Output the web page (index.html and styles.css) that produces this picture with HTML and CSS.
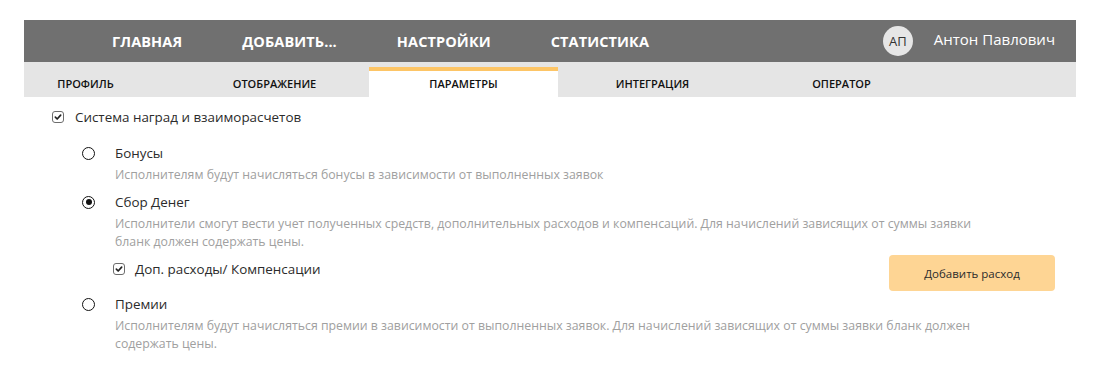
FILE: index.html
```html
<!DOCTYPE html>
<html lang="ru">
<head>
<meta charset="utf-8">
<title>Настройки — Параметры</title>
<link rel="stylesheet" href="styles.css">
</head>
<body>
<div class="page">
  <header class="topbar">
    <nav class="mainnav">
      <a class="mainnav-item">ГЛАВНАЯ</a>
      <a class="mainnav-item">ДОБАВИТЬ...</a>
      <a class="mainnav-item">НАСТРОЙКИ</a>
      <a class="mainnav-item">СТАТИСТИКА</a>
    </nav>
    <div class="user">
      <span class="avatar">АП</span>
      <span class="user-name">Антон Павлович</span>
    </div>
  </header>
  <div class="tabs">
    <div class="tabs-list">
      <div class="tab">ПРОФИЛЬ</div>
      <div class="tab">ОТОБРАЖЕНИЕ</div>
      <div class="tab tab-active">ПАРАМЕТРЫ</div>
      <div class="tab">ИНТЕГРАЦИЯ</div>
      <div class="tab">ОПЕРАТОР</div>
    </div>
  </div>
  <main class="content">
    <label class="check-row">
      <span class="checkbox"><svg viewBox="0 0 12 12" width="12" height="12"><path d="M2.8 6.2 L5 8.4 L9.2 3.8" fill="none" stroke="#222" stroke-width="2" stroke-linecap="round" stroke-linejoin="round"/></svg></span>
      <span class="check-label">Система наград и взаиморасчетов</span>
    </label>
    <div class="options">
      <div class="option">
        <div class="option-head"><span class="radio"></span><span class="option-label">Бонусы</span></div>
        <div class="option-desc">Исполнителям будут начисляться бонусы в зависимости от выполненных заявок</div>
      </div>
      <div class="option">
        <div class="option-head"><span class="radio radio-on"></span><span class="option-label">Сбор Денег</span></div>
        <div class="option-desc">Исполнители смогут вести учет полученных средств, дополнительных расходов и компенсаций. Для начислений зависящих от суммы заявки<br>бланк должен содержать цены.</div>
        <div class="sub-row">
          <label class="check-row sub-check">
            <span class="checkbox"><svg viewBox="0 0 12 12" width="12" height="12"><path d="M2.8 6.2 L5 8.4 L9.2 3.8" fill="none" stroke="#222" stroke-width="2" stroke-linecap="round" stroke-linejoin="round"/></svg></span>
            <span class="check-label">Доп. расходы/ Компенсации</span>
          </label>
          <button class="btn-add">Добавить расход</button>
        </div>
      </div>
      <div class="option option-last">
        <div class="option-head"><span class="radio"></span><span class="option-label">Премии</span></div>
        <div class="option-desc">Исполнителям будут начисляться премии в зависимости от выполненных заявок. Для начислений зависящих от суммы заявки бланк должен<br>содержать цены.</div>
      </div>
    </div>
  </main>
</div>
</body>
</html>
```
FILE: styles.css
```css
* { box-sizing: border-box; }
html, body { margin: 0; padding: 0; background: #fff; }
body { font-family: "Open Sans", "DejaVu Sans", sans-serif; color: #2b2b2b; }
.page { padding: 20px 24px 0; }

.topbar {
  height: 42px;
  background: #707070;
  display: flex;
  align-items: center;
  padding-left: 88px;
  padding-right: 21px;
}
.mainnav { display: flex; gap: 60px; }
.mainnav-item {
  color: #fff;
  font-weight: 700;
  font-size: 14.5px;
  letter-spacing: 0.1px;
}
.user { margin-left: auto; display: flex; align-items: center; gap: 21px; }
.avatar {
  width: 30px; height: 30px; border-radius: 50%;
  background: #e6e6e6; color: #333;
  display: flex; align-items: center; justify-content: center;
  font-size: 13px;
}
.user-name { color: #fff; font-size: 15px; margin-top: -4px; }

.tabs { height: 35px; background: #e5e5e5; overflow: hidden; }
.tabs-list { display: flex; margin-left: -33px; height: 100%; }
.tab {
  width: 189px; flex: none;
  text-align: center;
  font-size: 11px; font-weight: 600;
  line-height: 13px;
  padding-top: 15px;
  color: #111;
}
.tab-active {
  margin-top: 5px;
  border-top: 4.5px solid #fdc566;
  background: #fff;
  padding-top: 6px;
}

.content { padding: 10px 0 0 28px; }
.check-row { display: flex; align-items: center; gap: 11px; height: 20px; }
.checkbox {
  width: 12px; height: 12px; flex: none;
  border: 1px solid #6d6d6d; border-radius: 3px;
  display: flex; align-items: center; justify-content: center;
}
.checkbox svg { display: block; }
.check-label { font-size: 13.4px; color: #2b2b2b; }

.options { padding-left: 30px; margin-top: 16px; }
.option + .option { margin-top: 8px; }
.option-last { margin-top: 3px !important; }
.option-head { display: flex; align-items: center; gap: 20px; height: 20px; }
.radio {
  width: 13px; height: 13px; flex: none;
  border: 1.5px solid #111; border-radius: 50%;
  display: flex; align-items: center; justify-content: center;
}
.radio-on::after {
  content: ""; width: 6px; height: 6px; border-radius: 50%; background: #111;
}
.option-label { font-size: 13.4px; color: #2b2b2b; }
.option-desc {
  margin-top: 3px; margin-left: 33px;
  font-size: 12.3px; line-height: 18px; color: #a0a0a0;
}
.sub-row {
  margin: 4px 0 0 31px;
  width: 942px;
  display: flex; align-items: flex-start; justify-content: space-between;
  height: 36px;
}
.sub-check { margin-top: 4px; gap: 10px; }
.btn-add {
  width: 166px; height: 36px;
  border: none; border-radius: 4px;
  background: #fed594;
  font-family: inherit; font-size: 11.5px; color: #2b2b2b;
  padding: 0;
}
```
